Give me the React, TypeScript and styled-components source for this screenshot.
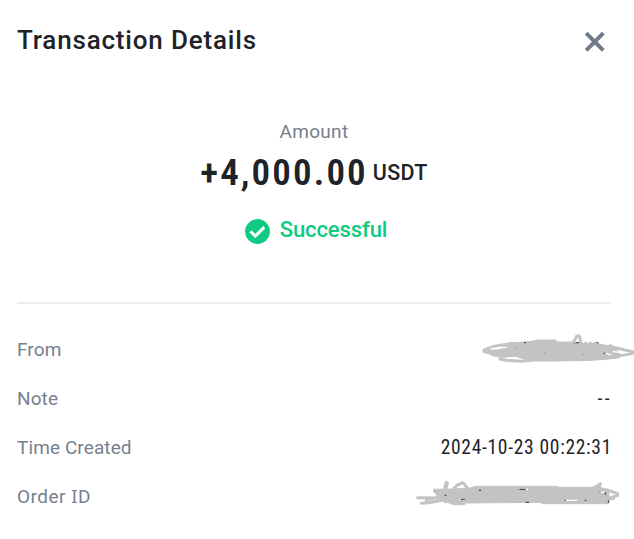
import React from "react";
import styled, { createGlobalStyle } from "styled-components";

const GlobalStyle = createGlobalStyle`
  * { box-sizing: border-box; }
  body { margin: 0; background: #fff; font-family: Roboto, sans-serif; overflow: hidden; }
`;

const Panel = styled.main`
  width: 634px;
  height: 539px;
  padding: 0 23px 0 17px;
  background: #fff;
  color: #1e2329;
  overflow: hidden;
`;

const Header = styled.header`
  display: flex;
  align-items: center;
  justify-content: space-between;
  height: 80px;
`;

const Title = styled.h1`
  margin: 0;
  font-size: 26px;
  line-height: 32px;
  font-weight: 500;
  letter-spacing: 0.82px;
  white-space: nowrap;
`;

const CloseButton = styled.button`
  display: flex;
  margin: 3px 5px 0 0;
  padding: 0;
  border: 0;
  background: none;
`;

const Summary = styled.section`
  display: flex;
  flex-direction: column;
  align-items: center;
  height: 222px;
  padding-top: 39px;
`;

const Caption = styled.div`
  font-size: 19px;
  line-height: 26px;
  letter-spacing: 0.3px;
  color: #76808f;
`;

const Amount = styled.div`
  display: flex;
  align-items: center;
  gap: 5px;
  height: 48px;
  margin-top: 4px;
  line-height: 48px;
  white-space: nowrap;
`;

const Figure = styled.span`
  font-size: 37px;
  font-weight: 600;
  font-stretch: 75%;
  letter-spacing: 2.1px;
`;

const Unit = styled.span`
  font-size: 21.5px;
  font-weight: 500;
  letter-spacing: 0.3px;
`;

const Status = styled.div`
  display: flex;
  align-items: center;
  gap: 10px;
  height: 30px;
  margin-top: 19px;
  padding-left: 4px;
  font-size: 22px;
  font-weight: 500;
  color: #0ecb81;
`;

const StatusText = styled.span`
  line-height: 30px;
  margin-top: -3px;
  letter-spacing: -0.1px;
`;

const Details = styled.dl`
  margin: 0;
  padding-top: 21px;
  border-top: 2px solid #eaecef;
`;

const Row = styled.div`
  display: flex;
  align-items: center;
  justify-content: space-between;
  height: 49px;
`;

const Label = styled.dt<{ $spacing?: number }>`
  font-size: 19px;
  letter-spacing: ${(p) => p.$spacing ?? 0.1}px;
  color: #76808f;
  white-space: nowrap;
`;

const SerifI = styled.span`
  font-family: "Noto Sans", sans-serif;
  font-size: 18.5px;
  line-height: 1;
`;

const Value = styled.dd<{ $spacing?: number }>`
  margin: 0 -1px 0 0;
  font-size: 19.5px;
  font-stretch: 75%;
  letter-spacing: ${(p) => p.$spacing ?? 0.7}px;
  white-space: nowrap;
`;

const Redaction = styled.dd<{ $bleed: number; $shift: number }>`
  display: flex;
  margin: ${(p) => p.$shift}px -${(p) => p.$bleed}px 0 0;
`;

const CloseIcon = () => (
  <svg width="22" height="22" viewBox="0 0 22 22" fill="none" stroke="#707a8a" strokeWidth="4">
    <path d="M2.2 2.2 19.3 19.3M19.3 2.2 2.2 19.3" />
  </svg>
);

const CheckIcon = () => (
  <svg width="25" height="25" viewBox="0 0 25 25">
    <circle cx="12.5" cy="12.5" r="12.4" fill="#0ecb81" />
    <path d="m5.5 12.3 4.8 4.8 9-9" fill="none" stroke="#fff" strokeWidth="3" />
  </svg>
);

const SenderScribble = () => (
  <svg width="164" height="45" viewBox="0 0 492 135" fill="none" stroke="#c3c3c3" strokeWidth="9" strokeLinejoin="round" strokeLinecap="round">
    <path fill="#c3c3c3" strokeWidth="3" d="M116 53 165 51 190 48 203 45 257 45 262 51 305 51 343 55 376 55 403 60 429 68 447 82 449 98 418 102 363 106 260 108 177 108 150 98 90 96 67 90 78 80Z" />
    <path d="M307 55 316 42 320 33 328 33 333 54M346 58V54M361 58V54M376 58V54" />
    <path d="M116 58C86 60 63 65 42 75L42 80 66 86M42 78 85 78M68 80V90L110 93M90 98V103L109 106 158 109 184 106" />
    <path d="M405 64 439 69 488 80V85L448 92M420 62 439 72M448 93 420 97" />
    <path stroke="#fff" strokeWidth="4" d="M64 71 109 67M112 99 142 98M430 80 466 84M410 85 422 90" />
    <g strokeWidth="3" strokeLinecap="butt">
      <path stroke="#28303a" d="M162 53H168M317 53H327M380 53H385M400 85H405" />
      <path stroke="#58a5e0" d="M310 56H315M382 56H386M402 82V88" />
      <path stroke="#b18061" d="M138 67H142M222 85H226M339 88H342" />
    </g>
  </svg>
);

const OrderScribble = () => (
  <svg width="229" height="50" viewBox="0 0 687 150" fill="none" stroke="#c3c3c3" strokeWidth="9" strokeLinejoin="round" strokeLinecap="round">
    <path fill="#c3c3c3" strokeWidth="3" d="M86 58 146 57 196 54 211 49 450 49 464 52 580 52 612 58 612 101 411 101 405 97 184 99 177 104 143 104 134 99 117 97 111 88 99 84Z" />
    <path strokeWidth="13" d="M121 56 125 39" />
    <path d="M147 54 157 45 174 38 187 54M38 83 98 84M49 100 72 98 111 91M64 90 100 82" />
    <path d="M566 53 576 48 586 41 582 54M612 62 638 71 637 77 615 83M614 87 626 85" />
    <path stroke="#fff" strokeWidth="4" d="M614 71 624 74M164 88H184M340 58H368M478 91H516M586 67H600" />
    <g strokeWidth="3" strokeLinecap="butt">
      <path stroke="#182e57" d="M222 61H228M119 76H124M167 88H181M343 58H362M362 97H372M478 91H483M539 91H544M601 66V74M610 91V98" />
      <path stroke="#b18061" d="M85 64H90M338 58H343M176 88H184M582 67H587" />
    </g>
  </svg>
);

export default function App() {
  return (
    <>
      <GlobalStyle />
      <Panel>
        <Header>
          <Title>Transaction Details</Title>
          <CloseButton aria-label="Close">
            <CloseIcon />
          </CloseButton>
        </Header>
        <Summary>
          <Caption>Amount</Caption>
          <Amount>
            <Figure>+4,000.00</Figure>
            <Unit>USDT</Unit>
          </Amount>
          <Status>
            <CheckIcon />
            <StatusText>Successful</StatusText>
          </Status>
        </Summary>
        <Details>
          <Row>
            <Label>From</Label>
            <Redaction $bleed={23} $shift={-4}>
              <SenderScribble />
            </Redaction>
          </Row>
          <Row>
            <Label>Note</Label>
            <Value $spacing={2.4}>--</Value>
          </Row>
          <Row>
            <Label>Time Created</Label>
            <Value>2024-10-23 00:22:31</Value>
          </Row>
          <Row>
            <Label $spacing={0.5}>
              Order <SerifI>I</SerifI>D
            </Label>
            <Redaction $bleed={23} $shift={-3}>
              <OrderScribble />
            </Redaction>
          </Row>
        </Details>
      </Panel>
    </>
  );
}
